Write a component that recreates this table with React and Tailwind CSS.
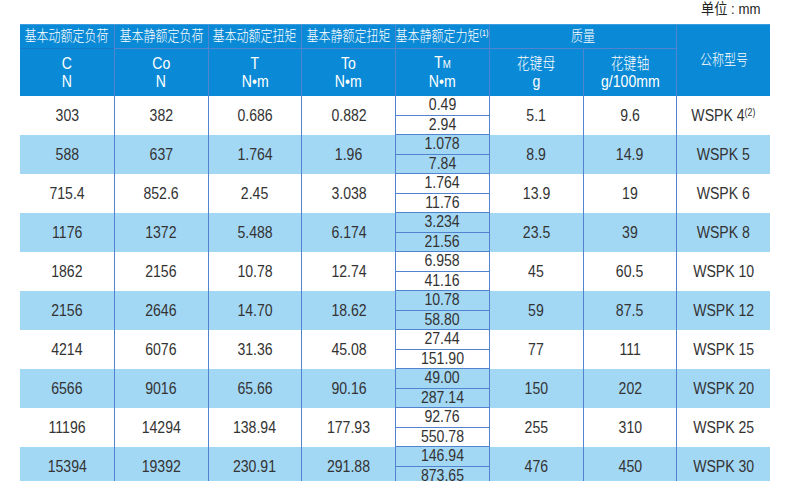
import React from "react";

const rows = [
  ["303", "382", "0.686", "0.882", ["0.49", "2.94"], "5.1", "9.6", "WSPK 4", "(2)"],
  ["588", "637", "1.764", "1.96", ["1.078", "7.84"], "8.9", "14.9", "WSPK 5"],
  ["715.4", "852.6", "2.45", "3.038", ["1.764", "11.76"], "13.9", "19", "WSPK 6"],
  ["1176", "1372", "5.488", "6.174", ["3.234", "21.56"], "23.5", "39", "WSPK 8"],
  ["1862", "2156", "10.78", "12.74", ["6.958", "41.16"], "45", "60.5", "WSPK 10"],
  ["2156", "2646", "14.70", "18.62", ["10.78", "58.80"], "59", "87.5", "WSPK 12"],
  ["4214", "6076", "31.36", "45.08", ["27.44", "151.90"], "77", "111", "WSPK 15"],
  ["6566", "9016", "65.66", "90.16", ["49.00", "287.14"], "150", "202", "WSPK 20"],
  ["11196", "14294", "138.94", "177.93", ["92.76", "550.78"], "255", "310", "WSPK 25"],
  ["15394", "19392", "230.91", "291.88", ["146.94", "873.65"], "476", "450", "WSPK 30"],
];

// narrow glyphs, the print uses a condensed face
function N({ children }) {
  return <span className="inline-block scale-x-[0.88] whitespace-nowrap">{children}</span>;
}

function Cn({ children }) {
  return <span className="inline-block scale-x-[0.8] whitespace-nowrap font-light">{children}</span>;
}

const line = "border-[#5283cf]";

export default function App() {
  return (
    <div
      className="w-[800px] h-[481px] overflow-hidden bg-white text-[#333]"
      style={{ fontFamily: '"Liberation Sans", "Noto Sans CJK SC", sans-serif' }}
    >
      <div className="h-[24px] flex justify-end pr-[36px] text-[15px] leading-[17px] text-[#222]">
        <N>单位 : mm</N>
      </div>

      <div className="ml-[20px] w-[750px]">
        {/* header */}
        <div className="grid grid-cols-8 grid-rows-[24px_47px] bg-[#0a8ad6] text-white border-t border-[#3d9be0]">
          {["基本动额定负荷", "基本静额定负荷", "基本动额定扭矩", "基本静额定扭矩"].map((t, i) => (
            <div
              key={t}
              className={`flex items-center justify-center text-[15px] border-b border-[#1976c4] ${i > 0 ? "border-l " + line : ""}`}
            >
              <Cn>{t}</Cn>
            </div>
          ))}
          <div className={`flex items-center justify-center text-[15px] border-b border-[#1976c4] border-l ${line}`}>
            <Cn>
              基本静额定力矩
              <span className="text-[9px] leading-none relative -top-[5px]">(1)</span>
            </Cn>
          </div>
          <div className={`col-span-2 flex items-center justify-center text-[15px] border-b border-[#1976c4] border-l ${line}`}>
            <Cn>质量</Cn>
          </div>
          <div className={`row-span-2 flex items-center justify-center text-[15px] border-l ${line}`}>
            <Cn>公称型号</Cn>
          </div>

          {[
            ["C", "N"],
            ["Co", "N"],
            ["T", "N•m"],
            ["To", "N•m"],
            ["TM", "N•m"],
            ["花键母", "g"],
            ["花键轴", "g/100mm"],
          ].map(([a, b], i) => (
            <div
              key={i}
              className={`flex flex-col items-center justify-center text-[16px] leading-[18px] ${i > 0 ? "border-l " + line : ""}`}
            >
              {i === 4 ? (
                <N>
                  T<span className="text-[11px]">M</span>
                </N>
              ) : i > 4 ? (
                <Cn>{a}</Cn>
              ) : (
                <N>{a}</N>
              )}
              <N>{b}</N>
            </div>
          ))}
        </div>

        {/* body */}
        {rows.map((r, ri) => (
          <div
            key={r[7]}
            className={`grid grid-cols-8 h-[39px] text-[16px] ${ri % 2 ? "bg-[#a3d8f5]" : "bg-white"}`}
          >
            {r.slice(0, 8).map((v, ci) =>
              ci === 4 ? (
                <div key={ci} className={`flex flex-col border-l ${line}`}>
                  <div className={`h-1/2 flex items-center justify-center leading-none border-b ${line}`}>
                    <N>{v[0]}</N>
                  </div>
                  <div className={`h-1/2 flex items-center justify-center leading-none border-b ${line}`}>
                    <N>{v[1]}</N>
                  </div>
                </div>
              ) : (
                <div
                  key={ci}
                  className={`flex items-center justify-center ${ci > 0 ? "border-l " + line : ""}`}
                >
                  <N>
                    {v}
                    {ci === 7 && r[8] && (
                      <span className="text-[10px] leading-none relative -top-[5px]">{r[8]}</span>
                    )}
                  </N>
                </div>
              )
            )}
          </div>
        ))}
      </div>
    </div>
  );
}
